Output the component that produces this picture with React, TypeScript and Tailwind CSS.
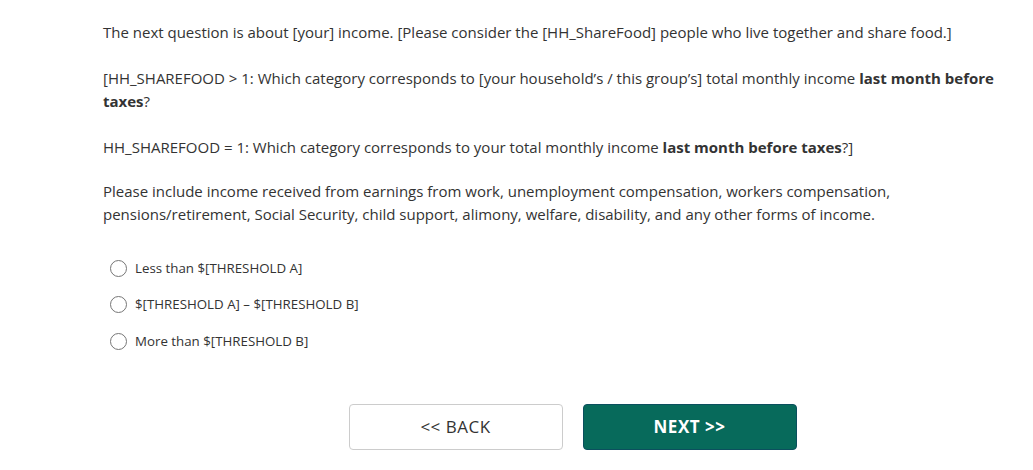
const options = [
  "Less than $[THRESHOLD A]",
  "$[THRESHOLD A] – $[THRESHOLD B]",
  "More than $[THRESHOLD B]",
];

export default function App() {
  return (
    <div className="min-h-[470px] w-[1033px] bg-white text-[#333333] font-['Open_Sans',sans-serif]">
      <div className="pl-[103px] pr-[14px] pt-[21px] text-[15px] leading-[23px]">
        <p className="mb-[23px]">
          The next question is about [your] income. [Please consider the [HH_ShareFood] people who live together and share food.]
        </p>
        <p className="mb-[23px]">
          [HH_SHAREFOOD &gt; 1: Which category corresponds to [your household’s / this group’s] total monthly income{" "}
          <b>last month before taxes</b>?
        </p>
        <p className="mb-[21px]">
          HH_SHAREFOOD = 1: Which category corresponds to your total monthly income <b>last month before taxes</b>?]
        </p>
        <p>
          Please include income received from earnings from work, unemployment compensation, workers compensation,
          pensions/retirement, Social Security, child support, alimony, welfare, disability, and any other forms of income.
        </p>

        <div className="mt-[33px] flex flex-col gap-[18.5px] pl-[7px]">
          {options.map((opt) => (
            <label key={opt} className="flex h-[18px] items-center gap-[8px] text-[13.3px] cursor-pointer">
              <span className="h-[17px] w-[17px] rounded-full border border-[#767676] bg-white" />
              <span>{opt}</span>
            </label>
          ))}
        </div>
      </div>

      <div className="mt-[54px] flex justify-center gap-[20px] pl-[112px]">
        <button className="h-[46px] w-[214px] rounded-[4px] border border-[#cccccc] bg-white text-[17px] text-[#333333] tracking-[0.5px]">
          &lt;&lt; BACK
        </button>
        <button className="h-[46px] w-[214px] rounded-[4px] border border-[#0b4f5e] bg-[#076a5b] text-[17px] font-bold text-white tracking-[0.5px]">
          NEXT &gt;&gt;
        </button>
      </div>
    </div>
  );
}
